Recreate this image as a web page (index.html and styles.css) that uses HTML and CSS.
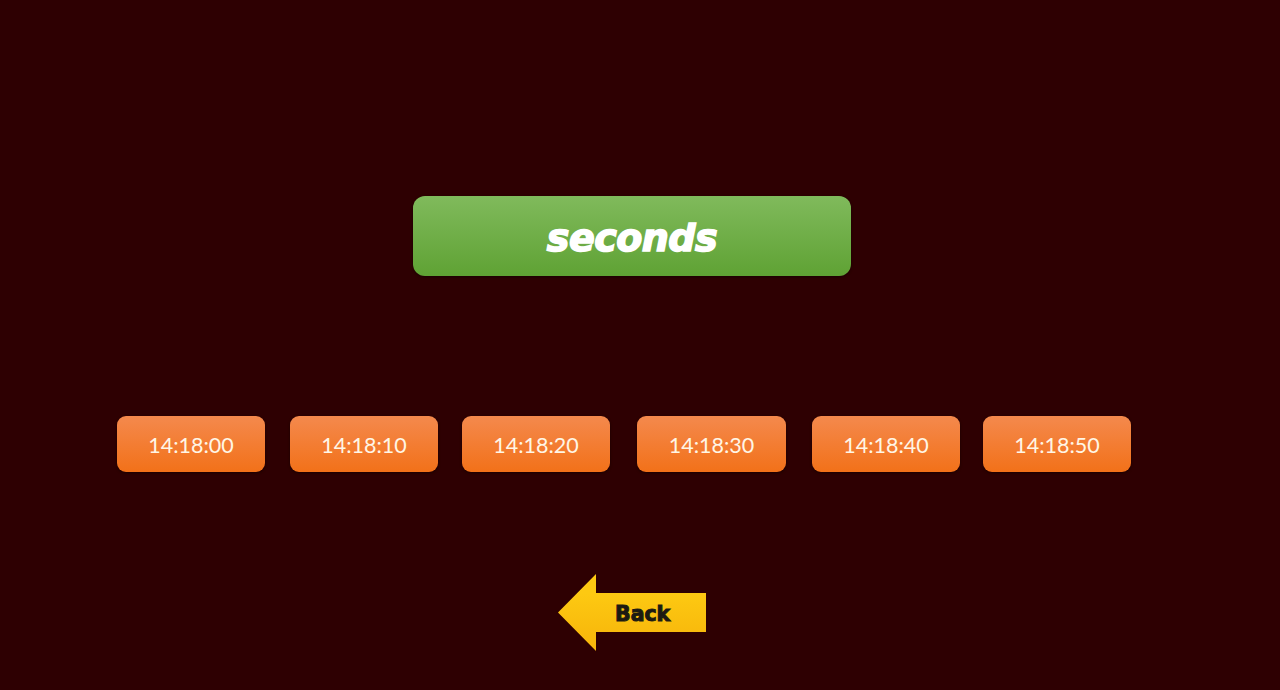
FILE: index.html
```html
<!DOCTYPE html>
<html lang="en">
<head>
<meta charset="utf-8">
<title>seconds</title>
<link rel="stylesheet" href="styles.css">
</head>
<body>
<main class="stage">
  <h1 class="title">seconds</h1>
  <div class="times">
    <a class="time">14:18:00</a>
    <a class="time gap-25">14:18:10</a>
    <a class="time gap-24">14:18:20</a>
    <a class="time gap-27 wide">14:18:30</a>
    <a class="time gap-26">14:18:40</a>
    <a class="time gap-23">14:18:50</a>
  </div>
  <a class="back"><span class="back-label">Back</span></a>
</main>
</body>
</html>
```

FILE: styles.css
```css
html, body {
  margin: 0;
  height: 100%;
  background: #2e0002;
}
.stage {
  box-sizing: border-box;
  height: 690px;
  padding-top: 196px;
  display: flex;
  flex-direction: column;
  align-items: flex-start;
  overflow: hidden;
}
.title {
  box-sizing: border-box;
  width: 438px;
  height: 80px;
  margin: 0 0 0 413px;
  padding-top: 4px;
  display: flex;
  align-items: center;
  justify-content: center;
  border-radius: 12px;
  background: linear-gradient(#80ba5c, #5fa234);
  box-shadow: 0 1px 3px rgba(0, 0, 0, .45);
  color: #fff;
  font: italic 700 38px "DejaVu Sans", sans-serif;
  letter-spacing: -0.5px;
  -webkit-text-stroke: 1.6px #fff;
}
.times {
  display: flex;
  margin: 140px 0 0 117px;
}
.time {
  box-sizing: border-box;
  width: 148px;
  height: 56px;
  padding-top: 2px;
  display: flex;
  align-items: center;
  justify-content: center;
  border-radius: 9px;
  background: linear-gradient(#f4894d, #f27119);
  box-shadow: 0 1px 3px rgba(0, 0, 0, .45);
  color: #fff6e6;
  font: 400 21.5px Lato, "Open Sans", sans-serif;
}
.wide { width: 149px; }
.gap-25 { margin-left: 25px; }
.gap-24 { margin-left: 24px; }
.gap-27 { margin-left: 27px; }
.gap-26 { margin-left: 26px; }
.gap-23 { margin-left: 23px; }
.back {
  box-sizing: border-box;
  width: 148px;
  height: 77px;
  margin: 102px 0 0 558px;
  padding: 2px 0 0 57px;
  display: flex;
  align-items: center;
  background: linear-gradient(#fdc912 25%, #f8b90c 80%);
  clip-path: polygon(38px 0, 38px 19px, 148px 19px, 148px 58px, 38px 58px, 38px 77px, 0 38.5px);
  color: #1c1a12;
  font: 700 20.5px "DejaVu Sans", sans-serif;
  -webkit-text-stroke: 1px #1c1a12;
}
.back-label {
  display: block;
}
```
